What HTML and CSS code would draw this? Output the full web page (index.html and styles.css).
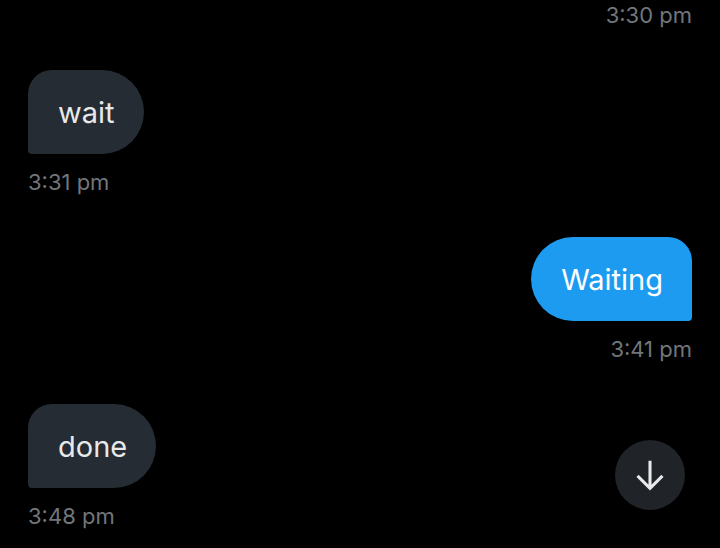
FILE: index.html
```html
<!DOCTYPE html>
<html>
<head>
<meta charset="utf-8">
<link rel="stylesheet" href="styles.css">
</head>
<body>
<div class="chat">
  <div class="msg out first">
    <div class="time">3:30 pm</div>
  </div>
  <div class="msg in">
    <div class="bubble">wait</div>
    <div class="time">3:31 pm</div>
  </div>
  <div class="msg out">
    <div class="bubble">Waiting</div>
    <div class="time">3:41 pm</div>
  </div>
  <div class="msg in">
    <div class="bubble">done</div>
    <div class="time">3:48 pm</div>
  </div>
</div>
<button class="scroll-down" aria-label="Scroll to bottom">
  <svg viewBox="0 0 24 24" width="46" height="46"><path d="M12 4.5v14.5M5.5 12.5L12 19l6.5-6.5" fill="none" stroke="#e7e9ea" stroke-width="1.6"/></svg>
</button>
</body>
</html>
```
FILE: styles.css
```css
html, body {
  margin: 0;
  background: #000;
  height: 100%;
  overflow: hidden;
}
body {
  font-family: "Inter", "Roboto", sans-serif;
}
.chat {
  padding: 3px 28px 0;
  display: flex;
  flex-direction: column;
  gap: 43px;
}
.msg {
  display: flex;
  flex-direction: column;
  align-items: flex-start;
}
.msg.out {
  align-items: flex-end;
}
.bubble {
  height: 84px;
  box-sizing: border-box;
  padding: 0 29px 0 30px;
  display: flex;
  align-items: center;
  font-size: 29px;
  color: #e7e9ea;
  background: #252c33;
}
.msg.in .bubble {
  border-radius: 24px 42px 42px 4px;
}
.msg.out .bubble {
  background: #1d9bf0;
  color: #fff;
  border-radius: 42px 24px 4px 42px;
}
.time {
  font-size: 22px;
  line-height: 24px;
  color: #71767b;
}
.bubble + .time {
  margin-top: 16px;
}
.scroll-down {
  position: absolute;
  left: 615px;
  top: 440px;
  width: 70px;
  height: 70px;
  border-radius: 50%;
  border: none;
  padding: 0;
  background: #202327;
  display: flex;
  align-items: center;
  justify-content: center;
}
```
